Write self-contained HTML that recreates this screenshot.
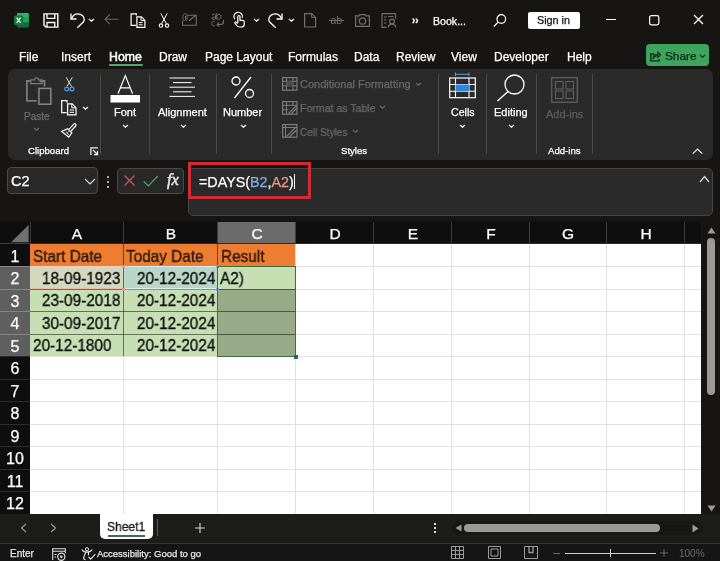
<!DOCTYPE html>
<html><head><meta charset="utf-8"><style>
html,body{margin:0;padding:0;}
body{width:720px;height:561px;overflow:hidden;position:relative;background:#161513;font-family:"Liberation Sans", sans-serif;}
.t{position:absolute;line-height:1;white-space:nowrap;will-change:transform;-webkit-text-stroke:0.25px currentColor;}
.r{position:absolute;}
svg.r{overflow:visible;will-change:transform;}
</style></head><body>
<svg class="r" style="left:13.8px;top:12.7px;" width="15" height="14.2" viewBox="0 0 15 14.2" fill="none"><rect x="3" y="0" width="11.8" height="14.2" rx="1.2" fill="#1f8a4c"/>
<rect x="3" y="0" width="11.8" height="4.7" rx="1" fill="#2fb36a"/><rect x="3" y="4.7" width="11.8" height="4.7" fill="#21a05a"/><rect x="3" y="9.4" width="11.8" height="4.8" rx="1" fill="#17693d"/>
<rect x="0" y="2.5" width="9.2" height="9.5" rx="1" fill="#127a3f"/><path d="M2.6 4.6l4 5.3M6.6 4.6l-4 5.3" stroke="#e8f5ec" stroke-width="1.3"/></svg>
<svg class="r" style="left:42.5px;top:12.5px;" width="16" height="15" viewBox="0 0 16 15" fill="none"><path d="M1 0.9h13.8v13.2H3L1 12.1z" stroke="#fff" stroke-width="1.4"/><path d="M4 0.9v4.5h7.8V0.9" stroke="#fff" stroke-width="1.3"/><path d="M4 14.1V9.5h7.8v4.6" stroke="#fff" stroke-width="1.3"/></svg>
<svg class="r" style="left:69.5px;top:12.5px;" width="15" height="15" viewBox="0 0 15 15" fill="none"><path d="M1 0.5v5.5h5.5" stroke="#fff" stroke-width="1.3"/><path d="M1.5 5.5C3 2 5.5 0.8 8 0.8c3.5 0 6.2 2.7 6.2 5.7 0 1-.3 1.8-.9 2.5l-6 5.8" stroke="#fff" stroke-width="1.3"/></svg>
<svg class="r" style="left:88px;top:17.5px;" width="7" height="5" viewBox="0 0 7 5" fill="none"><path d="M1 1l2.5 2.2l2.5 -2.2" stroke="#fff" stroke-width="1.2"/></svg>
<svg class="r" style="left:103.5px;top:14px;" width="15" height="11" viewBox="0 0 15 11" fill="none"><path d="M14.5 5.3H1M5.8 0.5L1 5.3l4.8 4.8" stroke="#6a6a6a" stroke-width="1.1"/></svg>
<svg class="r" style="left:129.5px;top:12.5px;" width="16" height="15" viewBox="0 0 16 15" fill="none"><path d="M6 12.3H1.1V0.9h5.3v1.6" stroke="#fff" stroke-width="1.2"/><path d="M6.9 3.9h4.5l3.5 3.5v6.9H6.9z" stroke="#fff" stroke-width="1.2"/><path d="M11 4v3.5h3.5" stroke="#fff" stroke-width="1"/><path d="M8.8 9.6h3.8M8.8 11.8h3.8" stroke="#fff" stroke-width="1"/></svg>
<svg class="r" style="left:158.5px;top:12.5px;" width="10" height="15" viewBox="0 0 10 15" fill="none"><path d="M1.8 0.3l5.5 10.3M8.2 0.3L2.7 10.6" stroke="#fff" stroke-width="1"/><circle cx="2" cy="12.6" r="1.7" stroke="#fff" stroke-width="1.1"/><circle cx="8" cy="12.6" r="1.7" stroke="#fff" stroke-width="1.1"/></svg>
<svg class="r" style="left:182px;top:12.5px;" width="15" height="13" viewBox="0 0 15 13" fill="none"><path d="M5.2 2.3h9.1v9.9H0.6V7.5" stroke="#707070" stroke-width="1.1"/><path d="M7 7.8L14 2.3" stroke="#707070" stroke-width="1.1"/><path d="M2.6 7.5L1.2 6.5C.5 5.8.5 1.2 2.6 0.7c1.8-.4 2.5 1.2 2.5 2.6v3.2c0 1.5-1.5 1.5-1.5 0V3" stroke="#707070" stroke-width="1"/></svg>
<svg class="r" style="left:210.5px;top:13px;" width="14" height="14.5" viewBox="0 0 14 14.5" fill="none"><path d="M1 2.2c.5-.8 1.3-1 2-1 1 0 1.6.5 1.6 1.5V6.3M4.6 4c-2 0-3.7.3-3.7 1.3 0 .8.7 1.1 1.4 1.1.9 0 1.7-.6 2.3-1.4" stroke="#707070" stroke-width="1"/><path d="M5.8 0v6.3M5.8 3.4c.4-1.3 1-2 2.1-2 1.3 0 2 1 2 2.5s-.7 2.5-2 2.5c-1 0-1.7-.6-2.1-1.6" stroke="#707070" stroke-width="1"/><path d="M4 9c-.4-.4-1-.6-1.5-.6-1 0-1.6.8-1.6 2.2s.6 2.3 1.6 2.3c.6 0 1.1-.2 1.5-.6" stroke="#707070" stroke-width="1"/><path d="M12.5 7v1.8c0 1.8-1 2.7-2.6 2.7H6.2M8.2 9.3L6 11.5l2.2 2.2" stroke="#707070" stroke-width="1.1"/></svg>
<svg class="r" style="left:233px;top:12.3px;" width="12" height="15" viewBox="0 0 12 15" fill="none"><path d="M1.8 7.2A4.3 4.3 0 1 1 9.3 5.8" stroke="#fff" stroke-width="1.2"/><path d="M4.8 11V4.6a1.1 1.1 0 0 1 2.2 0V8.3h2.6c1 0 1.6.6 1.6 1.5v2.6c0 1.8-1.2 2.6-3 2.6H6.5c-1.3 0-2.1-.6-2.7-1.5L1.9 11.1c-.4-.8.4-1.5 1.1-1L4.8 11.5" stroke="#fff" stroke-width="1.2"/></svg>
<svg class="r" style="left:253px;top:17.5px;" width="7" height="5" viewBox="0 0 7 5" fill="none"><path d="M1 1l2.5 2.2l2.5 -2.2" stroke="#fff" stroke-width="1.2"/></svg>
<svg class="r" style="left:268px;top:12.5px;" width="15" height="15" viewBox="0 0 15 15" fill="none"><path d="M14 0.5v5.5H8.5" stroke="#fff" stroke-width="1.3"/><path d="M13.5 5.5C12 2 9.5 0.8 7 0.8 3.5 0.8 0.8 3.5 0.8 6.5c0 1 .3 1.8.9 2.5l6 5.8" stroke="#fff" stroke-width="1.3"/></svg>
<svg class="r" style="left:287.5px;top:17.5px;" width="7" height="5" viewBox="0 0 7 5" fill="none"><path d="M1 1l2.5 2.2l2.5 -2.2" stroke="#fff" stroke-width="1.2"/></svg>
<svg class="r" style="left:304px;top:13px;" width="13" height="15" viewBox="0 0 13 15" fill="none"><path d="M0.6 0.6h7.2l3.8 3.8v9.6H0.6z" stroke="#707070" stroke-width="1.2"/><path d="M7.6 0.6v3.8h3.8" stroke="#707070" stroke-width="1"/></svg>
<svg class="r" style="left:328.5px;top:14px;" width="15" height="12" viewBox="0 0 15 12" fill="none"><text x="1.5" y="10" font-size="10.5" font-family="Liberation Sans" fill="#707070">ab</text><path d="M0 6.5h15" stroke="#707070" stroke-width="1"/></svg>
<svg class="r" style="left:355px;top:13.5px;" width="15" height="13" viewBox="0 0 15 13" fill="none"><path d="M0.6 1.8h3.5L5 0.6h5l.9 1.2h3.5v10.6H0.6z" stroke="#707070" stroke-width="1.2"/><circle cx="7.5" cy="7" r="3.2" stroke="#707070" stroke-width="1.2"/><circle cx="2.8" cy="4" r=".6" fill="#707070"/></svg>
<svg class="r" style="left:380.5px;top:12.5px;" width="16" height="15" viewBox="0 0 16 15" fill="none"><path d="M1 0.6h13.5v5M1 0.6v13.8h4.5" stroke="#707070" stroke-width="1.2"/><path d="M3 4h2.5M3 7h2.5M3 10h2.5M7 3.5h5.5" stroke="#707070" stroke-width="1.1"/><circle cx="11" cy="8.5" r="2.4" stroke="#707070" stroke-width="1.2"/><path d="M7 14.5c.6-2.3 2-3.3 4-3.3s3.4 1 4 3.3" stroke="#707070" stroke-width="1.2"/></svg>
<div class="t" style="left:411.5px;top:15.54px;font-size:10px;color:#fff;font-weight:bold;">&rsaquo;&rsaquo;</div>
<div class="t" style="left:433.3px;top:15.53px;font-size:10.6px;color:#fff;font-weight:normal;">Book...</div>
<svg class="r" style="left:493px;top:13.5px;" width="14" height="13" viewBox="0 0 14 13" fill="none"><circle cx="8.3" cy="5" r="4.3" stroke="#fff" stroke-width="1.2"/><path d="M5.2 8.1L0.8 12.5" stroke="#fff" stroke-width="1.3"/></svg>
<div class="r" style="left:527.5px;top:11.5px;width:52.5px;height:17.5px;background:#fff;border-radius:2px;"></div>
<div class="t" style="left:537px;top:15.26px;font-size:10.8px;color:#111;font-weight:normal;">Sign in</div>
<div class="r" style="left:605.8px;top:19px;width:10px;height:1.2px;background:#fff;"></div>
<svg class="r" style="left:649px;top:14.8px;" width="10.5" height="10.5" viewBox="0 0 10.5 10.5" fill="none"><rect x="0.6" y="0.6" width="9.2" height="9.2" rx="1.8" stroke="#fff" stroke-width="1.2"/></svg>
<svg class="r" style="left:693px;top:14px;" width="11" height="11" viewBox="0 0 11 11" fill="none"><path d="M1 1l9 9M10 1l-9 9" stroke="#fff" stroke-width="1.3"/></svg>
<div class="t" style="left:18.7px;top:50.64px;font-size:12px;color:#fff;font-weight:normal;">File</div>
<div class="t" style="left:61.400000000000006px;top:50.64px;font-size:12px;color:#fff;font-weight:normal;">Insert</div>
<div class="t" style="left:159.39999999999998px;top:50.64px;font-size:12px;color:#fff;font-weight:normal;">Draw</div>
<div class="t" style="left:204.7px;top:50.64px;font-size:12px;color:#fff;font-weight:normal;">Page Layout</div>
<div class="t" style="left:288.0px;top:50.64px;font-size:12px;color:#fff;font-weight:normal;">Formulas</div>
<div class="t" style="left:354.0px;top:50.64px;font-size:12px;color:#fff;font-weight:normal;">Data</div>
<div class="t" style="left:396.4px;top:50.64px;font-size:12px;color:#fff;font-weight:normal;">Review</div>
<div class="t" style="left:450.7px;top:50.64px;font-size:12px;color:#fff;font-weight:normal;">View</div>
<div class="t" style="left:494.0px;top:50.64px;font-size:12px;color:#fff;font-weight:normal;">Developer</div>
<div class="t" style="left:567.0px;top:50.64px;font-size:12px;color:#fff;font-weight:normal;">Help</div>
<div class="t" style="left:109px;top:51.19px;font-size:12.3px;color:#fff;font-weight:normal;-webkit-text-stroke:0.5px #fff;">Home</div>
<div class="r" style="left:109px;top:64.3px;width:34px;height:2px;background:#5aa66b;border-radius:1px;"></div>
<div class="r" style="left:646px;top:44.3px;width:63.3px;height:21.4px;background:#3ea35c;border-radius:4px;"></div>
<svg class="r" style="left:650px;top:50.5px;" width="11" height="10.5" viewBox="0 0 11 10.5" fill="none"><path d="M4 3H0.8v6.8h8.4V8" stroke="#0f2a14" stroke-width="1.3"/><path d="M3 8c0-3 2-4.6 5-4.6V1.2l2.5 2.6L8 6.3V4.8C6 4.8 4 5.8 3 8z" stroke="#0f2a14" stroke-width="1.1"/></svg>
<div class="t" style="left:665px;top:50.61px;font-size:11.8px;color:#0f2a14;font-weight:normal;-webkit-text-stroke:0.25px #0f2a14;">Share</div>
<svg class="r" style="left:699px;top:54px;" width="7" height="5" viewBox="0 0 7 5" fill="none"><path d="M1 1l2.5 2.2l2.5 -2.2" stroke="#0f2a14" stroke-width="1.1"/></svg>
<div class="r" style="left:7.5px;top:69px;width:705.5px;height:91px;background:#2a2a2a;border-radius:7px;"></div>
<div class="r" style="left:100.4px;top:74px;width:1px;height:80px;background:#4a4a4a;"></div>
<div class="r" style="left:149px;top:74px;width:1px;height:80px;background:#4a4a4a;"></div>
<div class="r" style="left:215.7px;top:74px;width:1px;height:80px;background:#4a4a4a;"></div>
<div class="r" style="left:270.7px;top:74px;width:1px;height:80px;background:#4a4a4a;"></div>
<div class="r" style="left:437.5px;top:74px;width:1px;height:80px;background:#4a4a4a;"></div>
<div class="r" style="left:486.4px;top:74px;width:1px;height:80px;background:#4a4a4a;"></div>
<div class="r" style="left:535.5px;top:74px;width:1px;height:80px;background:#4a4a4a;"></div>
<div class="r" style="left:592.3px;top:74px;width:1px;height:80px;background:#4a4a4a;"></div>
<svg class="r" style="left:25px;top:76px;" width="27" height="29" viewBox="0 0 27 29" fill="none"><path d="M5 5H1.9v19.8h10" stroke="#7a7a7a" stroke-width="1.8"/><path d="M14.5 5h5v5.5" stroke="#7a7a7a" stroke-width="1.8"/><path d="M5.8 7.6V3.8h3.6a2 2 0 014 0h3.6v3.8z" stroke="#7a7a7a" stroke-width="1.3"/><rect x="13.9" y="12.4" width="11.9" height="15.8" stroke="#888" stroke-width="1.5"/></svg>
<div class="t" style="left:24px;top:111.53px;font-size:10px;color:#6e6e6e;font-weight:normal;">Paste</div>
<svg class="r" style="left:33px;top:127px;" width="7" height="5" viewBox="0 0 7 5" fill="none"><path d="M1 1l2.5 2.2l2.5 -2.2" stroke="#6e6e6e" stroke-width="1.1"/></svg>
<svg class="r" style="left:63.5px;top:76.5px;" width="11" height="15" viewBox="0 0 11 15" fill="none"><path d="M2.2 0.3l5.3 9.2M8.3 0.3L3 9.5" stroke="#e0e0e0" stroke-width="1"/><circle cx="2.7" cy="12" r="1.9" stroke="#5aa0e0" stroke-width="1.2"/><circle cx="8" cy="12" r="1.9" stroke="#5aa0e0" stroke-width="1.2"/></svg>
<svg class="r" style="left:60.5px;top:100px;" width="16" height="15.5" viewBox="0 0 16 15.5" fill="none"><path d="M5.6 12.6H0.7V0.6h5.3v2.2" stroke="#fff" stroke-width="1.2"/><path d="M6.6 3.9h4.6l3.8 3.8v7.1H6.6z" stroke="#fff" stroke-width="1.2"/><path d="M10.8 4v3.8h4" stroke="#fff" stroke-width="1"/><path d="M8.6 10h4.4M8.6 12.3h4.4" stroke="#fff" stroke-width="1"/></svg>
<svg class="r" style="left:82px;top:106px;" width="7" height="5" viewBox="0 0 7 5" fill="none"><path d="M1 1l2.5 2.2l2.5 -2.2" stroke="#fff" stroke-width="1.2"/></svg>
<svg class="r" style="left:61px;top:123px;" width="15.5" height="14.5" viewBox="0 0 15.5 14.5" fill="none"><path d="M8.2 6.2l4.6-5a1.3 1.3 0 011.9 1.8l-4.6 5" stroke="#fff" stroke-width="1.2"/><path d="M6.6 5.6l4.2 4.2-3 4.3L0.6 8.4z" stroke="#fff" stroke-width="1.2"/><path d="M3.2 9.8l2.6 3M5 8.5l2.8 3.5M8.4 8l-1.5 1.5" stroke="#fff" stroke-width="0.9"/></svg>
<div class="t" style="left:27.5px;top:145.57px;font-size:9.6px;color:#fff;font-weight:normal;">Clipboard</div>
<svg class="r" style="left:89.5px;top:147px;" width="8.5" height="8.5" viewBox="0 0 8.5 8.5" fill="none"><path d="M0.9 8V0.9h7" stroke="#eee" stroke-width="1.3"/><path d="M3 3l4.2 4.2M7.5 4v3.6H3.9" stroke="#eee" stroke-width="1.3"/></svg>
<svg class="r" style="left:110px;top:74px;" width="31" height="29" viewBox="0 0 31 29" fill="none"><path d="M8 19.8L15.3 1.5l7.3 18.3M10.5 13.8h9.6" stroke="#fff" stroke-width="1.2"/><rect x="0.5" y="21" width="29.5" height="7.5" fill="#fff"/></svg>
<div class="t" style="left:114px;top:106.69px;font-size:11px;color:#fff;font-weight:normal;">Font</div>
<svg class="r" style="left:121.5px;top:123.8px;" width="7" height="5" viewBox="0 0 7 5" fill="none"><path d="M1 1l2.5 2.2l2.5 -2.2" stroke="#fff" stroke-width="1.2"/></svg>
<svg class="r" style="left:169px;top:76px;" width="27" height="22" viewBox="0 0 27 22" fill="none"><path d="M0.5 2h25.5M4 6.6h18.5M0.5 11.2h25.5M4 15.8h18.5M0.5 20.4h25.5" stroke="#fff" stroke-width="1"/></svg>
<div class="t" style="left:157.5px;top:106.69px;font-size:11px;color:#fff;font-weight:normal;">Alignment</div>
<svg class="r" style="left:179.5px;top:123.8px;" width="7" height="5" viewBox="0 0 7 5" fill="none"><path d="M1 1l2.5 2.2l2.5 -2.2" stroke="#fff" stroke-width="1.2"/></svg>
<svg class="r" style="left:231px;top:76px;" width="24" height="23" viewBox="0 0 24 23" fill="none"><circle cx="5" cy="5" r="4" stroke="#fff" stroke-width="1.3"/><circle cx="18.5" cy="17.5" r="4" stroke="#fff" stroke-width="1.3"/><path d="M20 1L3.5 22" stroke="#fff" stroke-width="1.3"/></svg>
<div class="t" style="left:223px;top:106.69px;font-size:11px;color:#fff;font-weight:normal;">Number</div>
<svg class="r" style="left:239.5px;top:123.8px;" width="7" height="5" viewBox="0 0 7 5" fill="none"><path d="M1 1l2.5 2.2l2.5 -2.2" stroke="#fff" stroke-width="1.2"/></svg>
<svg class="r" style="left:281.5px;top:77px;" width="16" height="14" viewBox="0 0 16 14" fill="none"><rect x="0.6" y="0.6" width="14.4" height="12.6" stroke="#7e7e7e" stroke-width="1.2"/><path d="M0.6 4.3h14.4M0.6 8.8h14.4M4.5 0.6v12.6M11 0.6v12.6" stroke="#7e7e7e" stroke-width="1"/><path d="M4.5 4.3h6.5v4.5H4.5z" fill="#4a4a4a"/></svg>
<div class="t" style="left:300px;top:79.19px;font-size:11px;color:#6a6a6a;font-weight:normal;">Conditional Formatting</div>
<svg class="r" style="left:414.8px;top:81.8px;" width="7" height="5" viewBox="0 0 7 5" fill="none"><path d="M1 1l2.5 2.2l2.5 -2.2" stroke="#6a6a6a" stroke-width="1.1"/></svg>
<svg class="r" style="left:281.5px;top:101px;" width="16" height="14" viewBox="0 0 16 14" fill="none"><rect x="0.6" y="0.6" width="14.4" height="12.6" stroke="#7e7e7e" stroke-width="1.2"/><path d="M0.6 4.3h14.4M0.6 8.8h6M4.5 0.6v12.6M11 0.6v4" stroke="#7e7e7e" stroke-width="1"/><path d="M6.5 12.5l8-8M9 13l6-6" stroke="#7e7e7e" stroke-width="1.1"/></svg>
<div class="t" style="left:300px;top:102.69px;font-size:11px;color:#6a6a6a;font-weight:normal;transform:scaleX(0.96);transform-origin:left top;">Format as Table</div>
<svg class="r" style="left:379px;top:105.3px;" width="7" height="5" viewBox="0 0 7 5" fill="none"><path d="M1 1l2.5 2.2l2.5 -2.2" stroke="#6a6a6a" stroke-width="1.1"/></svg>
<svg class="r" style="left:281.5px;top:124px;" width="16" height="14" viewBox="0 0 16 14" fill="none"><rect x="0.6" y="0.6" width="14.4" height="12.6" stroke="#7e7e7e" stroke-width="1.2"/><path d="M0.6 3.5h14.4M3.5 0.6v12.6" stroke="#7e7e7e" stroke-width="1"/><path d="M4.5 12.5l9-9M7.5 13l7-7" stroke="#7e7e7e" stroke-width="1.1"/></svg>
<div class="t" style="left:300px;top:126.69px;font-size:11px;color:#6a6a6a;font-weight:normal;transform:scaleX(0.91);transform-origin:left top;">Cell Styles</div>
<svg class="r" style="left:351.5px;top:129.3px;" width="7" height="5" viewBox="0 0 7 5" fill="none"><path d="M1 1l2.5 2.2l2.5 -2.2" stroke="#6a6a6a" stroke-width="1.1"/></svg>
<div class="t" style="left:340.7px;top:145.87px;font-size:9.6px;color:#fff;font-weight:normal;">Styles</div>
<svg class="r" style="left:448.5px;top:73px;" width="27" height="26" viewBox="0 0 27 26" fill="none"><path d="M6.5 1.3h13.5M6.5 -0.5v3.6M20 -0.5v3.6" stroke="#5aa0e0" stroke-width="1"/><rect x="0.7" y="5" width="25.6" height="19.7" stroke="#fff" stroke-width="1.2"/><path d="M0.7 11.5h25.6M0.7 18.2h25.6M6.5 5v19.7M20 5v19.7" stroke="#fff" stroke-width="1.1"/><rect x="6.5" y="11.5" width="13.5" height="6.7" fill="#2f86e0"/></svg>
<div class="t" style="left:451px;top:107.03px;font-size:10.6px;color:#fff;font-weight:normal;">Cells</div>
<svg class="r" style="left:459px;top:123.8px;" width="7" height="5" viewBox="0 0 7 5" fill="none"><path d="M1 1l2.5 2.2l2.5 -2.2" stroke="#fff" stroke-width="1.2"/></svg>
<svg class="r" style="left:496px;top:74px;" width="30" height="28" viewBox="0 0 30 28" fill="none"><circle cx="18.5" cy="10.5" r="9.5" stroke="#fff" stroke-width="1.3"/><path d="M12 17.5L1.5 27" stroke="#fff" stroke-width="1.4"/></svg>
<div class="t" style="left:494.4px;top:106.69px;font-size:11px;color:#fff;font-weight:normal;">Editing</div>
<svg class="r" style="left:507.5px;top:123.8px;" width="7" height="5" viewBox="0 0 7 5" fill="none"><path d="M1 1l2.5 2.2l2.5 -2.2" stroke="#fff" stroke-width="1.2"/></svg>
<svg class="r" style="left:551px;top:77px;" width="27" height="26" viewBox="0 0 27 26" fill="none"><rect x="0.7" y="0.7" width="25.6" height="24.6" stroke="#5e5e5e" stroke-width="1.3"/><rect x="4.5" y="4.5" width="7.5" height="7.5" stroke="#5e5e5e" stroke-width="1.2"/><rect x="15" y="4.5" width="7.5" height="7.5" stroke="#5e5e5e" stroke-width="1.2"/><rect x="4.5" y="14" width="7.5" height="7.5" stroke="#5e5e5e" stroke-width="1.2"/><rect x="15" y="14" width="7.5" height="7.5" stroke="#5e5e5e" stroke-width="1.2"/></svg>
<div class="t" style="left:545.6px;top:109.09px;font-size:11px;color:#5e5e5e;font-weight:normal;">Add-ins</div>
<div class="t" style="left:547.6px;top:145.87px;font-size:9.6px;color:#fff;font-weight:normal;">Add-ins</div>
<svg class="r" style="left:691.5px;top:147.5px;" width="11" height="6.5" viewBox="0 0 11 6.5" fill="none"><path d="M0.8 5.7l4.7-4.7 4.7 4.7" stroke="#eee" stroke-width="1.2"/></svg>
<div class="r" style="left:6.9px;top:167.3px;width:91.4px;height:26.4px;background:#282828;border:1px solid #4a4a4a;box-sizing:border-box;border-radius:4px;"></div>
<div class="t" style="left:10.8px;top:174.03px;font-size:14.5px;color:#fff;font-weight:normal;">C2</div>
<svg class="r" style="left:84px;top:178px;" width="12" height="7" viewBox="0 0 12 7" fill="none"><path d="M1 1l5 5 5-5" stroke="#ddd" stroke-width="1.2"/></svg>
<div class="r" style="left:106.8px;top:175.5px;width:2px;height:2px;background:#ddd;border-radius:1px;"></div>
<div class="r" style="left:106.8px;top:180.5px;width:2px;height:2px;background:#ddd;border-radius:1px;"></div>
<div class="r" style="left:106.8px;top:185.5px;width:2px;height:2px;background:#ddd;border-radius:1px;"></div>
<div class="r" style="left:117.4px;top:167.5px;width:66.6px;height:26.2px;background:#282828;border:1px solid #4a4a4a;box-sizing:border-box;border-radius:4px;"></div>
<svg class="r" style="left:123.5px;top:175px;" width="11" height="11" viewBox="0 0 11 11" fill="none"><path d="M0.5 0.5l10 10M10.5 0.5l-10 10" stroke="#d05a5a" stroke-width="1.2"/></svg>
<svg class="r" style="left:143px;top:175px;" width="16" height="12" viewBox="0 0 16 12" fill="none"><path d="M0.8 6.5l4.5 4.5 9.5-10" stroke="#4fa862" stroke-width="1.2"/></svg>
<div class="t" style="left:166.5px;top:172.23px;font-size:16.5px;color:#e6e6e6;font-weight:normal;font-family:'Liberation Serif',serif;-webkit-text-stroke:0.5px #e6e6e6;"><i>fx</i></div>
<div class="r" style="left:188px;top:167.5px;width:524.7px;height:48px;background:#2a2a2a;border:1px solid #464646;box-sizing:border-box;border-radius:5px;"></div>
<svg class="r" style="left:699px;top:175px;" width="11" height="8" viewBox="0 0 11 8" fill="none"><path d="M1 7l4.5-5.5L10 7" stroke="#ddd" stroke-width="1.2"/></svg>
<div class="t" style="left:199.4px;top:174.90px;font-size:14.3px;color:#fff;font-weight:normal;">=DAYS(<span style="color:#7cb3e4">B2</span>,<span style="color:#e99a86">A2</span>)</div>
<div class="r" style="left:294px;top:174px;width:1px;height:15px;background:#fff;"></div>
<div class="r" style="left:188.3px;top:162px;width:122.7px;height:37.4px;background:transparent;border:3px solid #d12b36;box-sizing:border-box;"></div>
<div class="r" style="left:0px;top:222px;width:701px;height:292px;background:#ffffff;"></div>
<div class="r" style="left:0px;top:222px;width:701px;height:22px;background:#0e0e0e;"></div>
<div class="r" style="left:0px;top:244px;width:30px;height:270px;background:#0e0e0e;"></div>
<svg class="r" style="left:10.5px;top:224.8px;" width="18" height="17.2" viewBox="0 0 18 17.2" fill="none"><path d="M17.6 0v17.2H0z" fill="#707070"/></svg>
<div class="r" style="left:217px;top:222px;width:79px;height:22px;background:#6b6b6b;"></div>
<div class="r" style="left:0px;top:266px;width:30px;height:23px;background:#5f5f5f;"></div>
<div class="r" style="left:0px;top:266px;width:30px;height:1px;background:#858585;"></div>
<div class="r" style="left:0px;top:289px;width:30px;height:22px;background:#5f5f5f;"></div>
<div class="r" style="left:0px;top:289px;width:30px;height:1px;background:#858585;"></div>
<div class="r" style="left:0px;top:311px;width:30px;height:23px;background:#5f5f5f;"></div>
<div class="r" style="left:0px;top:311px;width:30px;height:1px;background:#858585;"></div>
<div class="r" style="left:0px;top:334px;width:30px;height:22px;background:#5f5f5f;"></div>
<div class="r" style="left:0px;top:334px;width:30px;height:1px;background:#858585;"></div>
<div class="r" style="left:0px;top:356px;width:30px;height:1px;background:#2c2c2c;"></div>
<div class="r" style="left:0px;top:379px;width:30px;height:1px;background:#2c2c2c;"></div>
<div class="r" style="left:0px;top:401px;width:30px;height:1px;background:#2c2c2c;"></div>
<div class="r" style="left:0px;top:424px;width:30px;height:1px;background:#2c2c2c;"></div>
<div class="r" style="left:0px;top:446px;width:30px;height:1px;background:#2c2c2c;"></div>
<div class="r" style="left:0px;top:469px;width:30px;height:1px;background:#2c2c2c;"></div>
<div class="r" style="left:0px;top:491px;width:30px;height:1px;background:#2c2c2c;"></div>
<div class="r" style="left:0px;top:514px;width:30px;height:1px;background:#2c2c2c;"></div>
<div class="r" style="left:0px;top:243px;width:30px;height:1px;background:#3a3a3a;"></div>
<div class="r" style="left:30px;top:222px;width:1px;height:22px;background:#3c3c3c;"></div>
<div class="r" style="left:123px;top:222px;width:1px;height:22px;background:#3c3c3c;"></div>
<div class="r" style="left:217px;top:222px;width:1px;height:22px;background:#3c3c3c;"></div>
<div class="r" style="left:295px;top:222px;width:1px;height:22px;background:#3c3c3c;"></div>
<div class="r" style="left:373px;top:222px;width:1px;height:22px;background:#3c3c3c;"></div>
<div class="r" style="left:451px;top:222px;width:1px;height:22px;background:#3c3c3c;"></div>
<div class="r" style="left:529px;top:222px;width:1px;height:22px;background:#3c3c3c;"></div>
<div class="r" style="left:606px;top:222px;width:1px;height:22px;background:#3c3c3c;"></div>
<div class="r" style="left:684px;top:222px;width:1px;height:22px;background:#3c3c3c;"></div>
<div class="r" style="left:30px;top:243px;width:671px;height:1px;background:#2a2a2a;"></div>
<div class="r" style="left:123px;top:244px;width:1px;height:270px;background:#e2e2e2;"></div>
<div class="r" style="left:217px;top:244px;width:1px;height:270px;background:#e2e2e2;"></div>
<div class="r" style="left:295px;top:244px;width:1px;height:270px;background:#e2e2e2;"></div>
<div class="r" style="left:373px;top:244px;width:1px;height:270px;background:#e2e2e2;"></div>
<div class="r" style="left:451px;top:244px;width:1px;height:270px;background:#e2e2e2;"></div>
<div class="r" style="left:529px;top:244px;width:1px;height:270px;background:#e2e2e2;"></div>
<div class="r" style="left:606px;top:244px;width:1px;height:270px;background:#e2e2e2;"></div>
<div class="r" style="left:684px;top:244px;width:1px;height:270px;background:#e2e2e2;"></div>
<div class="r" style="left:30px;top:266px;width:671px;height:1px;background:#e2e2e2;"></div>
<div class="r" style="left:30px;top:289px;width:671px;height:1px;background:#e2e2e2;"></div>
<div class="r" style="left:30px;top:311px;width:671px;height:1px;background:#e2e2e2;"></div>
<div class="r" style="left:30px;top:334px;width:671px;height:1px;background:#e2e2e2;"></div>
<div class="r" style="left:30px;top:356px;width:671px;height:1px;background:#e2e2e2;"></div>
<div class="r" style="left:30px;top:379px;width:671px;height:1px;background:#e2e2e2;"></div>
<div class="r" style="left:30px;top:401px;width:671px;height:1px;background:#e2e2e2;"></div>
<div class="r" style="left:30px;top:424px;width:671px;height:1px;background:#e2e2e2;"></div>
<div class="r" style="left:30px;top:446px;width:671px;height:1px;background:#e2e2e2;"></div>
<div class="r" style="left:30px;top:469px;width:671px;height:1px;background:#e2e2e2;"></div>
<div class="r" style="left:30px;top:491px;width:671px;height:1px;background:#e2e2e2;"></div>
<div class="t" style="left:77.0px;transform:translateX(-50%);top:226.08px;font-size:15.5px;color:#fff;font-weight:normal;">A</div>
<div class="t" style="left:170.5px;transform:translateX(-50%);top:226.08px;font-size:15.5px;color:#fff;font-weight:normal;">B</div>
<div class="t" style="left:256.5px;transform:translateX(-50%);top:226.08px;font-size:15.5px;color:#fff;font-weight:normal;">C</div>
<div class="t" style="left:334.5px;transform:translateX(-50%);top:226.08px;font-size:15.5px;color:#fff;font-weight:normal;">D</div>
<div class="t" style="left:412.5px;transform:translateX(-50%);top:226.08px;font-size:15.5px;color:#fff;font-weight:normal;">E</div>
<div class="t" style="left:490.5px;transform:translateX(-50%);top:226.08px;font-size:15.5px;color:#fff;font-weight:normal;">F</div>
<div class="t" style="left:568.0px;transform:translateX(-50%);top:226.08px;font-size:15.5px;color:#fff;font-weight:normal;">G</div>
<div class="t" style="left:645.5px;transform:translateX(-50%);top:226.08px;font-size:15.5px;color:#fff;font-weight:normal;">H</div>
<div class="t" style="left:15px;transform:translateX(-50%);top:248.86px;font-size:16px;color:#fff;font-weight:normal;">1</div>
<div class="t" style="left:15px;transform:translateX(-50%);top:271.36px;font-size:16px;color:#fff;font-weight:normal;">2</div>
<div class="t" style="left:15px;transform:translateX(-50%);top:293.86px;font-size:16px;color:#fff;font-weight:normal;">3</div>
<div class="t" style="left:15px;transform:translateX(-50%);top:316.36px;font-size:16px;color:#fff;font-weight:normal;">4</div>
<div class="t" style="left:15px;transform:translateX(-50%);top:338.86px;font-size:16px;color:#fff;font-weight:normal;">5</div>
<div class="t" style="left:15px;transform:translateX(-50%);top:361.36px;font-size:16px;color:#fff;font-weight:normal;">6</div>
<div class="t" style="left:15px;transform:translateX(-50%);top:383.86px;font-size:16px;color:#fff;font-weight:normal;">7</div>
<div class="t" style="left:15px;transform:translateX(-50%);top:406.36px;font-size:16px;color:#fff;font-weight:normal;">8</div>
<div class="t" style="left:15px;transform:translateX(-50%);top:428.86px;font-size:16px;color:#fff;font-weight:normal;">9</div>
<div class="t" style="left:15px;transform:translateX(-50%);top:451.36px;font-size:16px;color:#fff;font-weight:normal;">10</div>
<div class="t" style="left:15px;transform:translateX(-50%);top:473.86px;font-size:16px;color:#fff;font-weight:normal;">11</div>
<div class="t" style="left:15px;transform:translateX(-50%);top:496.36px;font-size:16px;color:#fff;font-weight:normal;">12</div>
<div class="r" style="left:30px;top:244px;width:265px;height:22px;background:#ed7d31;"></div>
<div class="r" style="left:30px;top:266px;width:187px;height:90px;background:#c6e0b4;"></div>
<div class="r" style="left:30px;top:266px;width:93px;height:23px;background:#d2d9bf;"></div>
<div class="r" style="left:123px;top:266px;width:94px;height:23px;background:#b9d6c6;"></div>
<div class="r" style="left:217px;top:266px;width:78px;height:23px;background:#c6e0b4;"></div>
<div class="r" style="left:217px;top:289px;width:78px;height:67px;background:#98ab88;"></div>
<div class="r" style="left:30px;top:289px;width:265px;height:1px;background:rgba(0,0,0,0.5);"></div>
<div class="r" style="left:30px;top:311px;width:265px;height:1px;background:rgba(0,0,0,0.5);"></div>
<div class="r" style="left:30px;top:334px;width:265px;height:1px;background:rgba(0,0,0,0.5);"></div>
<div class="r" style="left:217px;top:266px;width:78px;height:1px;background:rgba(0,0,0,0.5);"></div>
<div class="r" style="left:123px;top:244px;width:1px;height:112px;background:rgba(0,0,0,0.5);"></div>
<div class="r" style="left:217px;top:244px;width:1px;height:112px;background:rgba(0,0,0,0.5);"></div>
<div class="r" style="left:30px;top:266px;width:93px;height:1px;background:#f3cdbf;"></div>
<div class="r" style="left:30px;top:288px;width:93px;height:1px;background:#eeb9a9;"></div>
<div class="r" style="left:30px;top:289px;width:93px;height:1px;background:#9a5a4a;"></div>
<div class="r" style="left:124px;top:266px;width:93px;height:1px;background:#d3ebf5;"></div>
<div class="r" style="left:124px;top:288px;width:93px;height:1px;background:#d9eef6;"></div>
<div class="r" style="left:124px;top:289px;width:93px;height:1px;background:#5f98cc;"></div>
<div class="r" style="left:122px;top:265px;width:3px;height:3px;background:#e09a9a;"></div>
<div class="r" style="left:122px;top:288px;width:3px;height:3px;background:#e09a9a;"></div>
<div class="r" style="left:216px;top:265px;width:3px;height:3px;background:#7fb0e0;"></div>
<div class="r" style="left:216px;top:288px;width:3px;height:3px;background:#7fb0e0;"></div>
<div class="r" style="left:217px;top:266px;width:79px;height:91px;background:transparent;border:1px solid #3f6e45;box-sizing:border-box;"></div>
<div class="r" style="left:294px;top:355px;width:3.5px;height:3.5px;background:#217346;"></div>
<div class="t" style="left:33.3px;top:247.53px;font-size:16.5px;color:#2d1a0c;font-weight:normal;transform:scaleX(0.93);transform-origin:left top;-webkit-text-stroke:0.35px currentColor;">Start Date</div>
<div class="t" style="left:126.3px;top:247.53px;font-size:16.5px;color:#2d1a0c;font-weight:normal;transform:scaleX(0.93);transform-origin:left top;-webkit-text-stroke:0.35px currentColor;">Today Date</div>
<div class="t" style="left:220.5px;top:247.53px;font-size:16.5px;color:#2d1a0c;font-weight:normal;transform:scaleX(0.93);transform-origin:left top;-webkit-text-stroke:0.35px currentColor;">Result</div>
<div class="t" style="right:600px;top:269.83px;font-size:16.5px;color:#111;font-weight:normal;transform:scaleX(0.93);transform-origin:right top;-webkit-text-stroke:0.35px currentColor;">18-09-1923</div>
<div class="t" style="right:600px;top:291.83px;font-size:16.5px;color:#111;font-weight:normal;transform:scaleX(0.93);transform-origin:right top;-webkit-text-stroke:0.35px currentColor;">23-09-2018</div>
<div class="t" style="right:600px;top:314.83px;font-size:16.5px;color:#111;font-weight:normal;transform:scaleX(0.93);transform-origin:right top;-webkit-text-stroke:0.35px currentColor;">30-09-2017</div>
<div class="t" style="left:32.5px;top:336.53px;font-size:16.5px;color:#111;font-weight:normal;transform:scaleX(0.93);transform-origin:left top;-webkit-text-stroke:0.35px currentColor;">20-12-1800</div>
<div class="t" style="right:505px;top:269.83px;font-size:16.5px;color:#111;font-weight:normal;transform:scaleX(0.93);transform-origin:right top;-webkit-text-stroke:0.35px currentColor;">20-12-2024</div>
<div class="t" style="right:505px;top:291.83px;font-size:16.5px;color:#111;font-weight:normal;transform:scaleX(0.93);transform-origin:right top;-webkit-text-stroke:0.35px currentColor;">20-12-2024</div>
<div class="t" style="right:505px;top:314.83px;font-size:16.5px;color:#111;font-weight:normal;transform:scaleX(0.93);transform-origin:right top;-webkit-text-stroke:0.35px currentColor;">20-12-2024</div>
<div class="t" style="right:505px;top:336.83px;font-size:16.5px;color:#111;font-weight:normal;transform:scaleX(0.93);transform-origin:right top;-webkit-text-stroke:0.35px currentColor;">20-12-2024</div>
<div class="t" style="left:220px;top:269.83px;font-size:16.5px;color:#111;font-weight:normal;transform:scaleX(0.93);transform-origin:left top;-webkit-text-stroke:0.35px currentColor;">A2)</div>
<svg class="r" style="left:706.5px;top:226.5px;" width="9" height="7" viewBox="0 0 9 7" fill="none"><path d="M4.5 0.5L8.5 6.5H0.5z" fill="#9a9a9a"/></svg>
<div class="r" style="left:706.5px;top:238px;width:8px;height:157px;background:#9a9a9a;border-radius:4px;"></div>
<svg class="r" style="left:706.5px;top:504.5px;" width="9" height="7" viewBox="0 0 9 7" fill="none"><path d="M0.5 0.5h8L4.5 6.5z" fill="#9a9a9a"/></svg>
<div class="r" style="left:0px;top:514.4px;width:720px;height:28.3px;background:#1c1c1a;"></div>
<svg class="r" style="left:20px;top:522.8px;" width="7" height="10" viewBox="0 0 7 10" fill="none"><path d="M6 1L1.5 5 6 9" stroke="#9a9a9a" stroke-width="1.1"/></svg>
<svg class="r" style="left:49.5px;top:522.8px;" width="7" height="10" viewBox="0 0 7 10" fill="none"><path d="M1 1l4.5 4L1 9" stroke="#9a9a9a" stroke-width="1.1"/></svg>
<div class="r" style="left:100px;top:514.4px;width:53.3px;height:24.6px;background:#ffffff;border-radius:0 0 5px 5px;"></div>
<div class="t" style="left:106.7px;top:519.96px;font-size:13.4px;color:#1a1a1a;font-weight:normal;-webkit-text-stroke:0.35px #1a1a1a;transform:scaleX(0.9);transform-origin:left top;">Sheet1</div>
<div class="r" style="left:107.8px;top:535.3px;width:37.2px;height:1.6px;background:#3a6b58;"></div>
<div class="r" style="left:156.5px;top:519px;width:1px;height:17px;background:#555;"></div>
<svg class="r" style="left:194.5px;top:523px;" width="10" height="10" viewBox="0 0 10 10" fill="none"><path d="M5 0v10M0 5h10" stroke="#cfcfcf" stroke-width="1.2"/></svg>
<div class="r" style="left:433.7px;top:523px;width:2px;height:2px;background:#ddd;"></div>
<div class="r" style="left:433.7px;top:527px;width:2px;height:2px;background:#ddd;"></div>
<div class="r" style="left:433.7px;top:531px;width:2px;height:2px;background:#ddd;"></div>
<div class="r" style="left:452px;top:521px;width:250px;height:14px;background:#171716;border-radius:7px;"></div>
<svg class="r" style="left:455px;top:524px;" width="7" height="8" viewBox="0 0 7 8" fill="none"><path d="M6.5 0.5v7L0.5 4z" fill="#9a9a9a"/></svg>
<div class="r" style="left:464.4px;top:523.7px;width:195.6px;height:8px;background:#9a9a9a;border-radius:4px;"></div>
<svg class="r" style="left:691.5px;top:524px;" width="7" height="9" viewBox="0 0 7 9" fill="none"><path d="M0.5 0.5v8L6.5 4.5z" fill="#9a9a9a"/></svg>
<div class="r" style="left:0px;top:542.7px;width:720px;height:18.3px;background:#151515;"></div>
<div class="r" style="left:0px;top:542.8px;width:720px;height:1px;background:#363636;"></div>
<div class="t" style="left:10px;top:548.74px;font-size:10px;color:#e8e8e8;font-weight:normal;">Enter</div>
<svg class="r" style="left:52px;top:547.5px;" width="14" height="13" viewBox="0 0 14 13" fill="none"><path d="M0.7 12V0.7h12.6v4.5M0.7 3.3h12.6" stroke="#e0e0e0" stroke-width="1.1"/><path d="M2.5 6.5h2M2.5 9h1.5" stroke="#e0e0e0" stroke-width="1"/><circle cx="9.3" cy="8.7" r="3.6" stroke="#e0e0e0" stroke-width="1.2"/><circle cx="9.3" cy="8.7" r="1.3" fill="#e0e0e0"/></svg>
<svg class="r" style="left:81px;top:547px;" width="15" height="13.5" viewBox="0 0 15 13.5" fill="none"><circle cx="6" cy="2.2" r="1.6" stroke="#e8e8e8" stroke-width="1"/><path d="M0.8 2.5c1 1.8 2.8 2.6 5.2 2.6s4.2-.8 5.2-2.6M4.5 5.2c0 2-1.8 3.5-1.8 5.5 0 1.2.8 2 1.8 2M7.5 5.2v3" stroke="#e8e8e8" stroke-width="1.1"/><path d="M7.5 9.8l2.2 2.4 4.6-5" stroke="#e8e8e8" stroke-width="1.1"/></svg>
<div class="t" style="left:97.3px;top:549.16px;font-size:9.5px;color:#e8e8e8;font-weight:normal;">Accessibility: Good to go</div>
<svg class="r" style="left:451px;top:546px;" width="13" height="13" viewBox="0 0 13 13" fill="none"><path d="M0.5 0.5h12v12H0.5zM0.5 4.5h12M0.5 8.5h12M4.5 0.5v12M8.5 0.5v12" stroke="#9a9a9a" stroke-width="1"/></svg>
<svg class="r" style="left:488px;top:546px;" width="13" height="13" viewBox="0 0 13 13" fill="none"><path d="M0.5 0.5h12v12H0.5z" stroke="#9a9a9a" stroke-width="1"/><path d="M3 3h7v7H3z" stroke="#9a9a9a" stroke-width="1"/></svg>
<svg class="r" style="left:523.5px;top:545.5px;" width="14" height="13" viewBox="0 0 14 13" fill="none"><path d="M0.5 0.5h13v12H0.5z" stroke="#9a9a9a" stroke-width="1"/><path d="M5 0.5v6h4v-6" stroke="#9a9a9a" stroke-width="1.3"/></svg>
<div class="r" style="left:553px;top:552.5px;width:7px;height:1px;background:#6a6a6a;"></div>
<div class="r" style="left:565px;top:552.5px;width:90.5px;height:1px;background:#d0d0d0;"></div>
<div class="r" style="left:609.5px;top:549px;width:1px;height:8px;background:#d0d0d0;"></div>
<svg class="r" style="left:660px;top:549px;" width="8" height="8" viewBox="0 0 8 8" fill="none"><path d="M4 0v8M0 4h8" stroke="#6a6a6a" stroke-width="1"/></svg>
<div class="t" style="left:678.5px;top:548.93px;font-size:10px;color:#6a6a6a;font-weight:normal;-webkit-text-stroke:0;">100%</div>
</body></html>
